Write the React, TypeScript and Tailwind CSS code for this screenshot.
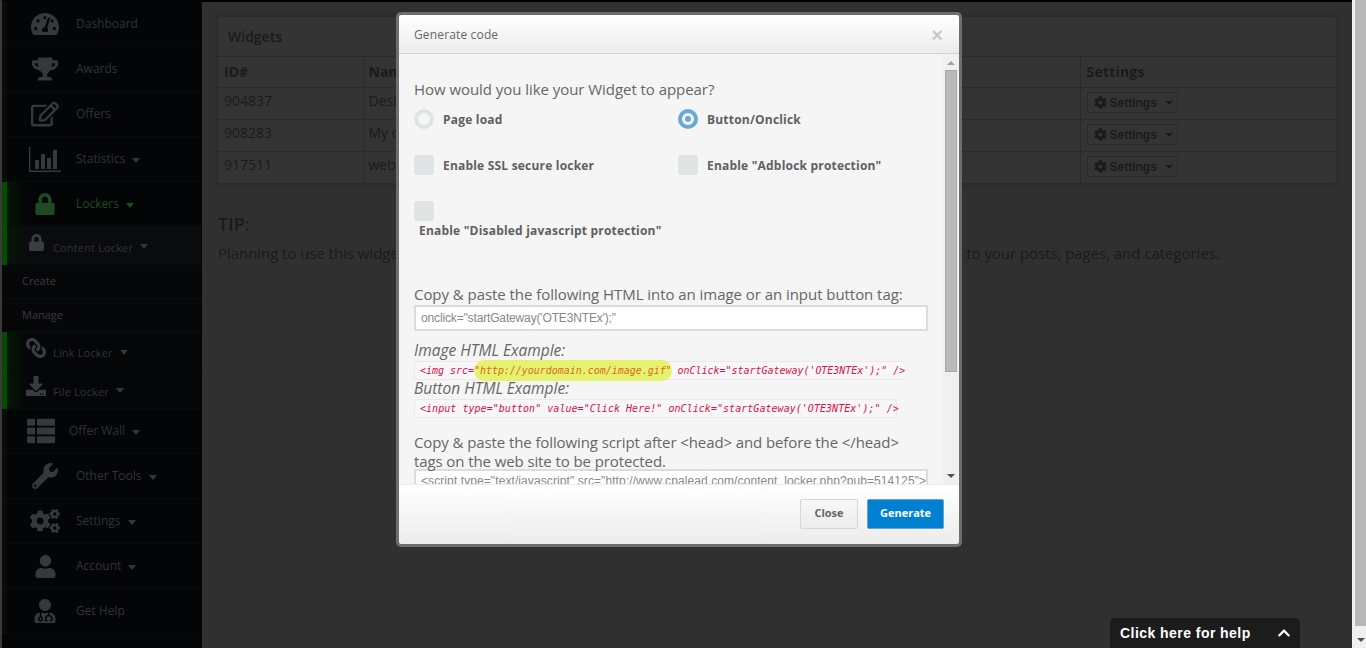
import type { ReactNode } from 'react'
import {
  FaTachometerAlt, FaTrophy, FaRegEdit, FaLock, FaLink, FaDownload, FaThList, FaWrench, FaCogs, FaUser, FaUserMd, FaCog, FaChevronUp,
} from 'react-icons/fa'

const OPEN = "font-['Open_Sans',sans-serif]"
const ARIAL = "font-['Liberation_Sans',sans-serif]"
const MONO = "font-['DejaVu_Sans_Mono',monospace]"

function StatsIcon() {
  return (
    <svg width="32" height="25" viewBox="0 0 32 25" fill="#33393d">
      <path d="M0 0h1.4v23.4H32V25H0z" />
      <rect x="6" y="13" width="4" height="9" />
      <rect x="12" y="7" width="4" height="15" />
      <rect x="18" y="11" width="4" height="11" />
      <rect x="24" y="3" width="4" height="19" />
    </svg>
  )
}

type NavItem = { label: string; icon: ReactNode; caret?: boolean; box: string; h: string; sub?: boolean; green?: boolean; bg?: string }

const ICO = 'text-[#33393d]'
const SUBICO = 'text-[#3a3c3e]'

const TOP_NAV: NavItem[] = [
  { label: 'Dashboard', icon: <FaTachometerAlt size={28} className={ICO} />, box: 'w-[69px] pl-[7px]', h: 'h-[45px]' },
  { label: 'Awards', icon: <FaTrophy size={26} className={ICO} />, box: 'w-[69px] pl-[7px]', h: 'h-[45px]' },
  { label: 'Offers', icon: <FaRegEdit size={28} className={ICO} />, box: 'w-[69px] pl-[7px]', h: 'h-[45px]' },
  { label: 'Statistics', icon: <StatsIcon />, caret: true, box: 'w-[69px] pl-[7px]', h: 'h-[45px]' },
]

const LOCKER_SUB: NavItem[] = [
  { label: 'Link Locker', icon: <FaLink size={20} className={`${SUBICO} -scale-x-100`} />, caret: true, sub: true, box: 'w-[46px] pl-[12px]', h: 'h-[39px]', bg: 'bg-[#050607]' },
  { label: 'File Locker', icon: <FaDownload size={20} className={SUBICO} />, caret: true, sub: true, box: 'w-[46px] pl-[12px]', h: 'h-[38px]', bg: 'bg-[#050607]' },
]

const BOTTOM_NAV: NavItem[] = [
  { label: 'Offer Wall', icon: <FaThList size={28} className={ICO} />, caret: true, box: 'w-[62px] pl-[6px]', h: 'h-[45px]' },
  { label: 'Other Tools', icon: <FaWrench size={26} className={ICO} />, caret: true, box: 'w-[69px] pl-[7px]', h: 'h-[45px]' },
  { label: 'Settings', icon: <FaCogs size={30} className={ICO} />, caret: true, box: 'w-[69px] pl-[7px]', h: 'h-[45px]' },
  { label: 'Account', icon: <FaUser size={23} className={ICO} />, caret: true, box: 'w-[69px] pl-[7px]', h: 'h-[45px]' },
  { label: 'Get Help', icon: <FaUserMd size={24} className={ICO} />, box: 'w-[69px] pl-[7px]', h: 'h-[45px]' },
]

function Caret({ color = 'border-t-[#33383c]' }: { color?: string }) {
  return <span className={`ml-[7px] mt-[2px] inline-block h-0 w-0 border-x-[4px] border-t-[5px] border-x-transparent ${color}`} />
}

function NavRow({ item, stripe }: { item: NavItem; stripe?: boolean }) {
  const textCls = item.sub ? 'mt-[5px] text-[11px] tracking-[0.15px]' : 'text-[12px]'
  return (
    <div className={`flex ${item.h} ${item.bg ?? ''}`}>
      <div className={`w-[5px] ${stripe ? 'bg-[#064a06]' : 'bg-[#090b0d]'}`} />
      <div className={`flex flex-1 items-center border-b border-[#080a0c] ${stripe ? 'bg-[linear-gradient(90deg,#041604,transparent_22px)]' : ''}`}>
        <div className={`flex justify-center ${item.box} ${item.sub ? 'mb-[7px]' : ''}`}>{item.icon}</div>
        <span className={`${OPEN} ${textCls} ${item.green ? 'text-[#1f4a1f]' : 'text-[#303437]'}`}>{item.label}</span>
        {item.caret && <Caret color={item.green ? 'border-t-[#1f4a1f]' : undefined} />}
      </div>
    </div>
  )
}

function Sidebar() {
  return (
    <aside className="flex h-full w-[202px] shrink-0 bg-[#030507]">
      <div className="w-[2px] bg-[#3a3a3a]" />
      <div className="flex-1 pt-[2px]">
        {TOP_NAV.map(item => <NavRow key={item.label} item={item} />)}
        <NavRow stripe item={{ label: 'Lockers', icon: <FaLock size={22} className="text-[#1f4a25]" />, caret: true, green: true, box: 'w-[69px] pl-[7px]', h: 'h-[45px]' }} />
        <NavRow stripe item={{ label: 'Content Locker', icon: <FaLock size={17} className={SUBICO} />, caret: true, sub: true, box: 'w-[46px] pl-[12px]', h: 'h-[38px]', bg: 'bg-[#0a0b0c]' }} />
        {['Create', 'Manage'].map(label => (
          <div key={label} className={`flex h-[33.5px] items-center border-b border-[#0c0c0c] bg-[#060708] pl-[20px] text-[11px] text-[#3a3c3e] ${OPEN}`}>{label}</div>
        ))}
        {LOCKER_SUB.map(item => <NavRow key={item.label} item={item} stripe />)}
        {BOTTOM_NAV.map(item => <NavRow key={item.label} item={item} />)}
      </div>
    </aside>
  )
}

const ROWS = [
  { id: '904837', name: 'Desk' },
  { id: '908283', name: 'My c' },
  { id: '917511', name: 'web' },
]

function MainPage() {
  return (
    <main className={`h-full flex-1 border-t-2 border-black bg-[#303030] px-4 pt-[15px] text-[#1b1b1b] ${OPEN}`}>
      <section className="w-[1118px] rounded-[3px] bg-[#343434] shadow-[0_0_4px_rgba(0,0,0,0.25)]">
        <h2 className="flex h-[40px] items-center border-b border-[#2a2a2a] pl-[10px] text-[14px] font-semibold">Widgets</h2>
        <table className="w-full table-fixed border-collapse text-[14px]">
          <colgroup>
            <col className="w-[145px]" />
            <col className="w-[717px]" />
            <col />
          </colgroup>
          <thead>
            <tr className="h-[30px] text-left">
              <th className="border-b border-r border-[#2b2b2b] pl-[6px] font-bold">ID#</th>
              <th className="border-b border-r border-[#2b2b2b] pl-[5px] font-bold">Name</th>
              <th className="border-b border-[#2b2b2b] pl-[6px] font-bold tracking-[0.2px]">Settings</th>
            </tr>
          </thead>
          <tbody>
            {ROWS.map(r => (
              <tr key={r.id} className="h-[32px]">
                <td className="border-b border-r border-[#2b2b2b] pb-[5px] pl-[6px]">{r.id}</td>
                <td className="border-b border-r border-[#2b2b2b] pb-[5px] pl-[5px]">{r.name}</td>
                <td className="border-b border-[#2b2b2b] pb-[2px] pl-[6px]">
                  <span className={`inline-flex h-[21px] w-[91px] items-center rounded-[2px] border border-[#2a2a2a] pl-[6px] align-middle text-[12px] font-bold ${ARIAL}`}>
                    <FaCog size={13} className="mr-[3px]" />
                    Settings
                    <span className="ml-[8px] h-0 w-0 border-x-[4px] border-t-[4px] border-x-transparent border-t-[#1b1b1b]" />
                  </span>
                </td>
              </tr>
            ))}
          </tbody>
        </table>
      </section>
      <h3 className="mt-[28px] text-[18px] font-semibold leading-[24px]">TIP:</h3>
      <p className="mt-[7px] whitespace-nowrap text-[15px] leading-[20px] tracking-[-0.05px]">
        Planning to use this widget on your own WordPress site? Install our free plugin now to easily add the widget to your posts, pages, and categories.
      </p>
    </main>
  )
}

function PageScrollbar() {
  return (
    <div className="flex h-full w-[16px] shrink-0 flex-col items-center bg-[#f0f0f0] pl-[1px]">
      <div className="h-[626px] w-[11px] bg-[#b9b9b9]" />
      <div className="mt-[12px] h-0 w-0 border-x-[4px] border-t-[4px] border-x-transparent border-t-[#505050]" />
    </div>
  )
}

function Radio({ checked }: { checked?: boolean }) {
  return (
    <span className={`flex h-[20px] w-[20px] shrink-0 items-center justify-center rounded-full border-[4px] ${checked ? 'border-[#6aa8d2] bg-[#f0f5f8]' : 'border-[#e0e3e4] bg-[#f5f5f5]'}`}>
      {checked && <span className="h-[6px] w-[6px] rounded-full bg-[#6aa8d2]" />}
    </span>
  )
}

const Box = () => <span className="block h-[20px] w-[20px] shrink-0 rounded-[4px] bg-[#dfe3e4]" />

const LABEL = `text-[12px] font-bold tracking-[0.2px] text-[#606060] ${OPEN}`
const HEAD = `text-[15px] leading-[19px] text-[#666] ${OPEN}`
const EXAMPLE = `mb-[2px] text-[15.5px] italic leading-[17px] text-[#666] ${OPEN}`
const CODE = `flex h-[19px] items-center whitespace-nowrap border border-[#e8e8ee] bg-[#f7f7f9] pl-[5px] text-[10px] italic text-[#dd1144] ${MONO}`

function Option({ control, text }: { control: ReactNode; text: string }) {
  return (
    <label className="flex h-[20px] items-center gap-[9px]">
      {control}
      <span className={`mt-[1px] ${LABEL}`}>{text}</span>
    </label>
  )
}

function ModalBody() {
  return (
    <div className="relative h-[430px] overflow-hidden bg-[#f5f5f5]">
      <div className="w-[529px] pl-[15px] pt-[26px]">
        <p className={`tracking-[-0.05px] ${HEAD}`}>How would you like your Widget to appear?</p>
        <div className="mt-[10px] grid grid-cols-[264px_1fr]">
          <Option control={<Radio />} text="Page load" />
          <Option control={<Radio checked />} text="Button/Onclick" />
        </div>
        <div className="mt-[26px] grid grid-cols-[264px_1fr]">
          <Option control={<Box />} text="Enable SSL secure locker" />
          <Option control={<Box />} text={'Enable "Adblock protection"'} />
        </div>
        <div className="mt-[26px]"><Box /></div>
        <p className={`mt-[1px] pl-[5px] leading-[17px] ${LABEL}`}>Enable "Disabled javascript protection"</p>
        <p className={`mt-[46px] whitespace-nowrap tracking-[-0.05px] ${HEAD}`}>Copy &amp; paste the following HTML into an image or an input button tag:</p>
        <div className={`mt-[1px] flex h-[26px] w-[514px] items-center border-2 border-[#dcdcdc] bg-white pl-[5px] text-[12px] tracking-[-0.15px] text-[#888] ${ARIAL}`}>onclick="startGateway('OTE3NTEx');"</div>
        <p className={`mt-[11px] ${EXAMPLE}`}>Image HTML Example:</p>
        <div className={`w-[491px] rounded-l-[3px] border-r-0 tracking-[-0.03px] ${CODE}`}>
          &lt;img src=<span className="rounded-full bg-[#e6f26e] py-[3px] text-[#dc6a1c]">"http://yourdomain.com/image.gif"</span>&nbsp;onClick="startGateway('OTE3NTEx');" /&gt;
        </div>
        <p className={EXAMPLE}>Button HTML Example:</p>
        <div className={`w-[483px] rounded-[3px] tracking-[0.04px] ${CODE}`}>&lt;input type="button" value="Click Here!" onClick="startGateway('OTE3NTEx');" /&gt;</div>
        <p className={`mt-[15px] w-[514px] tracking-[-0.1px] ${HEAD}`}>Copy &amp; paste the following script after &lt;head&gt; and before the &lt;/head&gt; tags on the web site to be protected.</p>
        <div className={`-mt-[2px] h-[30px] w-[514px] overflow-hidden whitespace-nowrap border-2 border-[#dcdcdc] bg-white pl-[5px] pt-[2px] text-[12px] leading-[16px] tracking-[0.09px] text-[#888] ${ARIAL}`}>
          &lt;script type="text/javascript" src="http://www.cpalead.com/content_locker.php?pub=514125"&gt;
        </div>
      </div>
      {/* barra de scroll del modal */}
      <div className="absolute bottom-0 right-0 top-0 flex w-[16px] flex-col items-center bg-[#f0f0f0]">
        <div className="mt-[7px] h-0 w-0 border-x-[4px] border-b-[4px] border-x-transparent border-b-[#a0a0a0]" />
        <div className="mt-[5px] h-[302px] w-[12px] border border-[#a8a8a8] bg-[#b9b9b9]" />
        <div className="mt-[102px] h-0 w-0 border-x-[4px] border-t-[4px] border-x-transparent border-t-[#505050]" />
      </div>
    </div>
  )
}

function Modal() {
  return (
    <div className="absolute left-[396px] top-[12px] w-[566px] overflow-hidden rounded-[5px] border-[3px] border-[#6e6e6e]">
      <header className="flex h-[39px] items-center justify-between border-b border-[#d2d2d2] bg-gradient-to-b from-white to-[#ececec] pl-[15px] pr-[16px] pt-[2px]">
        <span className={`text-[12px] tracking-[0.15px] text-[#666] ${OPEN}`}>Generate code</span>
        <span className={`text-[20px] font-bold leading-none text-[#c8c8c8] ${ARIAL}`}>×</span>
      </header>
      <ModalBody />
      <footer className="flex h-[60px] items-center justify-end gap-[9px] border-t border-[#ececec] bg-gradient-to-b from-white to-[#ececec] pb-[2px] pr-[15px]">
        <button className={`h-[30px] w-[58px] rounded-[2px] border border-[#d6d6d6] bg-gradient-to-b from-[#f8f8f8] to-[#ececec] text-[11px] font-bold text-[#666] ${OPEN}`}>Close</button>
        <button className={`h-[30px] w-[77px] rounded-[2px] border border-[#6f9fc4] bg-[#0080d0] text-[11px] font-bold text-white ${OPEN}`}>Generate</button>
      </footer>
    </div>
  )
}

export default function App() {
  return (
    <div className="relative flex h-[648px] w-[1366px] overflow-hidden">
      <Sidebar />
      <MainPage />
      <PageScrollbar />
      <Modal />
      <div className={`absolute bottom-0 left-[1110px] flex h-[30px] w-[190px] items-center justify-between rounded-t-[5px] bg-[#1c1c1c] pl-[10px] pr-[9px] text-[14px] font-bold tracking-[0.45px] text-white ${ARIAL}`}>
        Click here for help
        <FaChevronUp size={14} />
      </div>
    </div>
  )
}
